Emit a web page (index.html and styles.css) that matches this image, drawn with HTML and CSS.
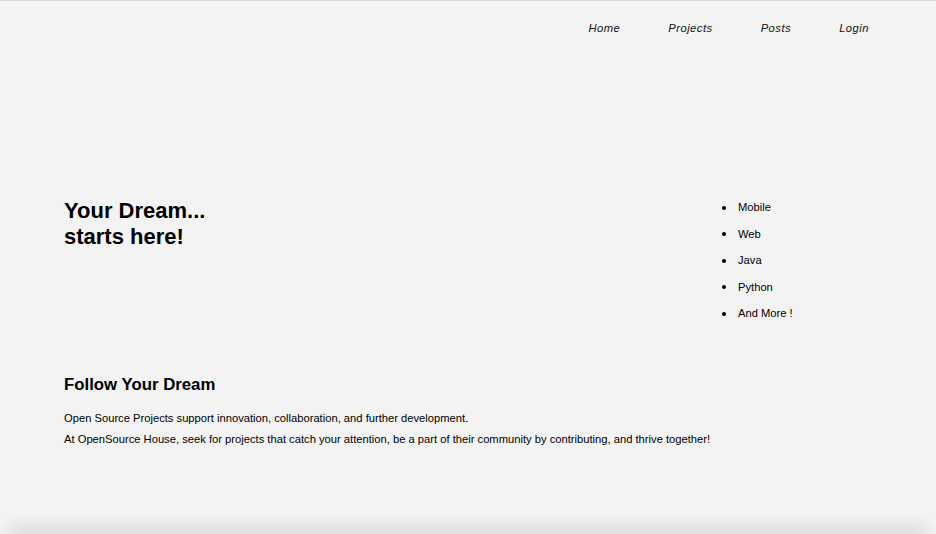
FILE: index.html
```html
<!DOCTYPE html>
<html lang="en">
<head>
<meta charset="utf-8">
<title>OpenSource House</title>
<link rel="stylesheet" href="styles.css">
</head>
<body>
<div class="page">
  <header class="site-header">
    <nav>
      <ul class="nav-list">
        <li><a href="#">Home</a></li>
        <li><a href="#">Projects</a></li>
        <li><a href="#">Posts</a></li>
        <li><a href="#">Login</a></li>
      </ul>
    </nav>
  </header>
  <main class="content">
    <section class="hero">
      <h1 class="hero-title">Your Dream...<br>starts here!</h1>
      <ul class="topics">
        <li>Mobile</li>
        <li>Web</li>
        <li>Java</li>
        <li>Python</li>
        <li>And More !</li>
      </ul>
    </section>
    <section class="about">
      <h2 class="about-title">Follow Your Dream</h2>
      <p class="about-text">Open Source Projects support innovation, collaboration, and further development.</p>
      <p class="about-text">At OpenSource House, seek for projects that catch your attention, be a part of their community by contributing, and thrive together!</p>
    </section>
  </main>
  <footer class="site-footer"></footer>
</div>
</body>
</html>
```

FILE: styles.css
```css
html, body {
  margin: 0;
  padding: 0;
}

body {
  background: #f3f3f3;
  font-family: "Liberation Sans", Arial, Helvetica, sans-serif;
  color: #000;
  overflow: hidden;
}

.page {
  height: 534px;
  display: flex;
  flex-direction: column;
  border-top: 1px solid #d6d6d6;
  box-sizing: border-box;
}

.site-header {
  padding-top: 17px;
}

.nav-list {
  list-style: none;
  margin: 0;
  padding: 0 67px 0 0;
  display: flex;
  justify-content: flex-end;
  gap: 48px;
}

.nav-list a {
  font-size: 11.2px;
  line-height: 16px;
  font-style: italic;
  letter-spacing: 0.5px;
  color: #111;
  text-decoration: none;
}

.content {
  flex: 1;
  padding: 0 64px;
}

.hero {
  margin-top: 158px;
  display: flex;
  justify-content: space-between;
  align-items: flex-start;
}

.hero-title {
  margin: 4px 0 0;
  font-size: 22px;
  line-height: 26px;
  font-weight: bold;
}

.topics {
  margin: 0;
  padding-left: 23.5px;
  width: 174px;
  box-sizing: border-box;
  list-style: none;
  font-size: 11.2px;
  line-height: 26.5px;
}

.topics li {
  display: flex;
  align-items: center;
}

.topics li::before {
  content: "";
  flex: none;
  width: 4px;
  height: 4px;
  margin: 1px 12.5px 0 0;
  border-radius: 50%;
  background: #000;
}

.about {
  margin-top: 48px;
}

.about-title {
  margin: 0 0 13.75px;
  font-size: 16.8px;
  line-height: 20px;
  font-weight: bold;
}

.about-text {
  margin: 0;
  font-size: 11.2px;
  line-height: 21px;
}

.site-footer {
  flex: none;
  height: 0;
  margin: 0 14px;
  box-shadow: 0 0 18px 6px rgba(0, 0, 0, 0.14);
}
```
